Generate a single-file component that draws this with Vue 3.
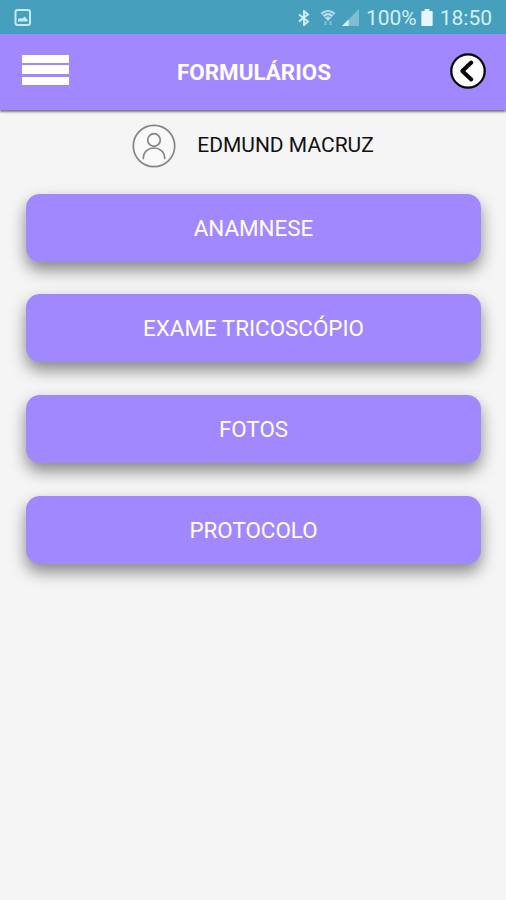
<script setup>
import { ref } from 'vue';

const patientName = ref('EDMUND MACRUZ');

const forms = [
  { id: 'anamnese', label: 'ANAMNESE' },
  { id: 'exame', label: 'EXAME TRICOSCÓPIO' },
  { id: 'fotos', label: 'FOTOS' },
  { id: 'protocolo', label: 'PROTOCOLO' },
];
</script>

<template>
  <div class="screen">
    <div class="statusBar">
      <svg
        class="pictureIcon"
        width="18"
        height="18"
        viewBox="0 0 18 18"
      >
        <rect
          x="1.5"
          y="1"
          width="14.5"
          height="15"
          rx="2"
          fill="none"
          stroke="#c3ecf8"
          stroke-width="2"
        />
        <path
          d="M4 12.500V10l2.500-1 2 .5L10.500 7.500l3 3v2z"
          fill="#c3ecf8"
        />
      </svg>

      <div class="statusRight">
        <svg
          class="bluetoothIcon"
          width="12"
          height="16"
          viewBox="0 0 12 16"
        >
          <path
            d="M1 4.500l9 7L6 15V1l4 3.500-9 7"
            fill="none"
            stroke="#d3eff7"
            stroke-width="1.900"
          />
        </svg>
        <svg
          class="wifiIcon"
          width="16"
          height="18"
          viewBox="0 0 16 18"
        >
          <path
            d="M.5 4Q8-2 15.500 4L8 12z"
            fill="#b4dce9"
          />
          <path
            d="M2.500 5.500Q8 1.500 13.500 5.500M5 8Q8 5.500 11 8"
            fill="none"
            stroke="#479fbe"
            stroke-width="1"
          />
          <path
            d="M5.500 12v4M10.500 12v4"
            stroke="#80c1d5"
            stroke-width="2"
          />
        </svg>
        <svg
          class="signalIcon"
          width="17"
          height="17"
          viewBox="0 0 18 18"
        >
          <path
            d="M0 18L18 0V18z"
            fill="#7fbdd1"
          />
          <path
            d="M0 18L7 11V18z"
            fill="#d8f1f8"
          />
        </svg>
        <span class="batteryText">100%</span>
        <svg
          class="batteryIcon"
          width="12"
          height="17"
          viewBox="0 0 12 18"
        >
          <path
            d="M3.500 0h5v2H11q1 0 1 1v14q0 1-1 1H1q-1 0-1-1V3q0-1 1-1h2.500z"
            fill="#e6f6fa"
          />
        </svg>
        <span class="clock">18:50</span>
      </div>
    </div>

    <header class="toolbar">
      <button
        type="button"
        class="menuButton"
        aria-label="Menu"
      >
        <span class="menuLine" />
        <span class="menuLine" />
        <span class="menuLine" />
      </button>
      <h1 class="title">
        FORMULÁRIOS
      </h1>
      <button
        type="button"
        class="backButton"
        aria-label="Voltar"
      >
        <svg
          width="36"
          height="36"
          viewBox="0 0 36 36"
        >
          <circle
            cx="18"
            cy="18"
            r="16.700"
            fill="#fff"
            stroke="#050505"
            stroke-width="2.200"
          />
          <path
            d="M21.300 9.500L12.300 18l9 8.500"
            fill="none"
            stroke="#050505"
            stroke-width="4"
            stroke-linecap="round"
            stroke-linejoin="round"
          />
        </svg>
      </button>
    </header>

    <div class="patient">
      <svg
        width="44"
        height="44"
        viewBox="0 0 44 44"
        fill="none"
        stroke="#858585"
        stroke-width="1.700"
      >
        <circle
          cx="22"
          cy="22"
          r="20.700"
          fill="#f9f9f9"
        />
        <circle
          cx="22"
          cy="16"
          r="6.300"
        />
        <path
          d="M11.300 34.500c0-14 21.400-14 21.400 0"
          stroke-linecap="round"
        />
      </svg>
      <span class="patientName">{{ patientName }}</span>
    </div>

    <main class="formList">
      <button
        v-for="form in forms"
        :key="form.id"
        type="button"
        class="formButton"
      >
        {{ form.label }}
      </button>
    </main>
  </div>
</template>

<style>
body {
  background: #f5f5f5;
}
</style>

<style scoped>
.screen {
  background: #f5f5f5;
  box-sizing: border-box;
  font-family: Roboto, 'Liberation Sans', sans-serif;
  height: 900px;
  overflow: hidden;
}

.statusBar {
  align-items: center;
  background: #479fbe;
  box-sizing: border-box;
  color: #d3eff7;
  display: flex;
  font-size: 21px;
  height: 34px;
  justify-content: space-between;
  line-height: 34px;
  padding: 2px 14px 0 13.5px;
}

.statusRight {
  align-items: center;
  display: flex;
}

.bluetoothIcon {
  margin-bottom: 1px;
}

.wifiIcon {
  margin-left: 10px;
}

.signalIcon {
  margin-bottom: 1px;
  margin-left: 6px;
}

.batteryText {
  margin-left: 7px;
}

.batteryIcon {
  margin-bottom: 1px;
  margin-left: 4px;
}

.clock {
  margin-left: 7px;
}

.toolbar {
  align-items: center;
  background: #a188ff;
  box-shadow: 0 2px 2px rgba(0, 0, 0, 0.5);
  box-sizing: border-box;
  display: grid;
  grid-template-columns: 1fr auto 1fr;
  height: 76px;
  padding: 0 20px 1px 22px;
}

.menuButton,
.backButton {
  background: none;
  border: none;
  cursor: pointer;
  display: flex;
  padding: 0;
}

.menuButton {
  flex-direction: column;
  gap: 2.5px;
  margin-top: -4px;
  width: 47px;
}

.backButton {
  justify-self: end;
  margin-top: -1px;
}

.menuLine {
  background: #fff;
  height: 8px;
  width: 47px;
}

.menuLine:nth-child(2) {
  height: 9px;
}

.title {
  color: #fff;
  font-size: 22.4px;
  font-weight: 700;
  line-height: 26px;
  margin: 0;
}

.patient {
  align-items: center;
  display: flex;
  gap: 21px;
  height: 44px;
  justify-content: center;
  margin-top: 14px;
}

.patientName {
  color: #111;
  font-size: 21px;
  line-height: 24px;
  margin-top: -3px;
}

.formList {
  display: flex;
  flex-direction: column;
  gap: 32.8px;
  padding: 25.5px 25px 0 26px;
}

.formButton {
  background: #a188ff;
  border: none;
  border-radius: 14px;
  box-shadow: 0 8px 16px rgba(0, 0, 0, 0.45);
  color: #fff;
  cursor: pointer;
  font-family: inherit;
  font-size: 22.4px;
  height: 68px;
  line-height: 26px;
  padding: 0;
}
</style>
